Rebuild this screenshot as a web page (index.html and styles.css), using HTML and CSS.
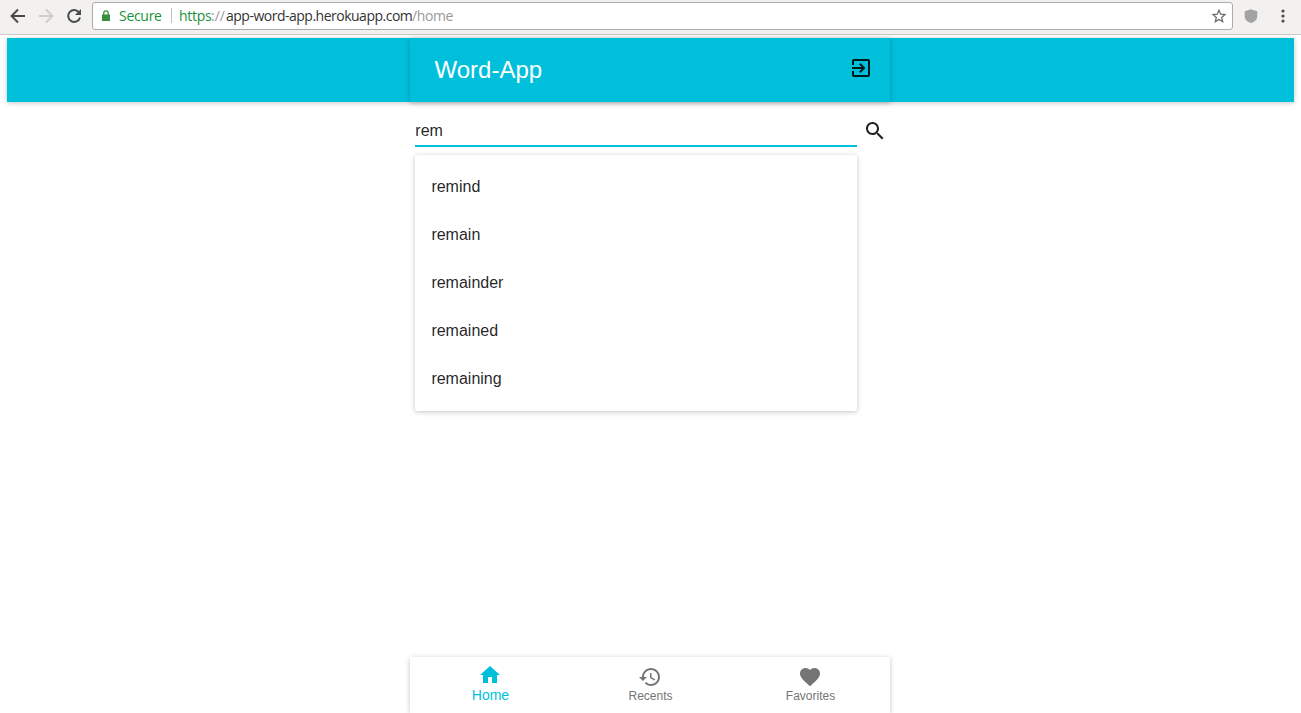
FILE: index.html
```
<!DOCTYPE html>
<html lang="en">
<head>
<meta charset="utf-8">
<title>Word-App</title>
<link rel="stylesheet" href="styles.css">
</head>
<body>
<div class="browser">
  <svg class="nav-icon" viewBox="0 0 16 16"><path d="M15 8H2M8 1.5L1.6 8L8 14.5" fill="none" stroke="#4a4a4a" stroke-width="2"/></svg>
  <svg class="nav-icon" viewBox="0 0 16 16"><path d="M1 8H14M8 1.5L14.4 8L8 14.5" fill="none" stroke="#cdcdcd" stroke-width="2"/></svg>
  <svg class="nav-icon" viewBox="0 0 16 16"><path d="M13.2 4.6A6 6 0 1 0 14 9.5" fill="none" stroke="#4a4a4a" stroke-width="2"/><path d="M15 1V7H9z" fill="#4a4a4a"/></svg>
  <div class="address">
    <svg class="lock" viewBox="0 0 8 11"><path d="M0 4.5h8V11H0z" fill="#388e3c"/><path d="M1.8 5V3a2.2 2.2 0 0 1 4.4 0v2" fill="none" stroke="#388e3c" stroke-width="1.2"/></svg>
    <span class="secure">Secure</span>
    <span class="divider"></span>
    <span class="url"><span class="scheme">https</span><span class="slashes">://</span><span class="host">app-word-app.herokuapp.com</span><span class="path">/home</span></span>
    <svg class="star" viewBox="0 0 14 14"><path d="M7 1.2l1.7 4 4.2.4-3.2 2.8 1 4.2L7 10.4l-3.7 2.2 1-4.2L1.1 5.6l4.2-.4z" fill="none" stroke="#6e6e6e" stroke-width="1.3"/></svg>
  </div>
  <svg class="shield" viewBox="0 0 14 14"><path d="M7 0.300L13.300 2.300V7c0 3.500-2.600 6-6.300 7-3.700-1-6.300-3.500-6.300-7V2.300z" fill="#a3a3a3"/></svg>
  <svg class="more" viewBox="0 0 4 14"><g fill="#4a4a4a"><circle cx="2" cy="2" r="1.6"/><circle cx="2" cy="7" r="1.6"/><circle cx="2" cy="12" r="1.6"/></g></svg>
</div>
<header class="banner">
  <div class="app-bar">
    <h1 class="title">Word-App</h1>
    <svg class="icon" viewBox="0 0 24 24"><path d="M10.09 15.59L11.5 17l5-5-5-5-1.41 1.41L12.67 11H3v2h9.670l-2.580 2.590zM19 3H5c-1.110 0-2 .9-2 2v4h2V5h14v14H5v-4H3v4c0 1.100.890 2 2 2h14c1.100 0 2-.9 2-2V5c0-1.100-.9-2-2-2z"/></svg>
  </div>
</header>
<main class="content">
  <div class="search">
    <div class="field">rem</div>
    <ul class="suggestions">
      <li>remind</li>
      <li>remain</li>
      <li>remainder</li>
      <li>remained</li>
      <li>remaining</li>
    </ul>
  </div>
  <svg class="icon search-icon" viewBox="0 0 24 24"><path d="M15.500 14h-.790l-.280-.270C15.410 12.590 16 11.110 16 9.500 16 5.910 13.090 3 9.500 3S3 5.910 3 9.500 5.910 16 9.500 16c1.610 0 3.090-.590 4.230-1.570l.270.280v.790l5 4.990L20.490 19l-4.990-5zm-6 0C7.010 14 5 11.990 5 9.500S7.010 5 9.500 5 14 7.010 14 9.500 11.990 14 9.500 14z"/></svg>
</main>
<nav class="bottom-nav">
  <div class="tab active">
    <svg class="tab-icon" viewBox="0 0 24 24"><path d="M10 20v-6h4v6h5v-8h3L12 3 2 12h3v8z"/></svg>
    <span class="label">Home</span>
  </div>
  <div class="tab">
    <svg class="tab-icon" viewBox="0 0 24 24"><path d="M13 3c-4.970 0-9 4.030-9 9H1l3.890 3.890.070.140L9 12H6c0-3.870 3.130-7 7-7s7 3.130 7 7-3.130 7-7 7c-1.930 0-3.680-.790-4.940-2.060l-1.420 1.420C8.270 19.990 10.510 21 13 21c4.970 0 9-4.030 9-9s-4.030-9-9-9zm-1 5v5l4.280 2.540.720-1.210-3.500-2.080V8H12z"/></svg>
    <span class="label">Recents</span>
  </div>
  <div class="tab">
    <svg class="tab-icon" viewBox="0 0 24 24"><path d="M12 21.350l-1.450-1.320C5.400 15.360 2 12.280 2 8.500 2 5.420 4.420 3 7.500 3c1.740 0 3.410.810 4.500 2.090C13.090 3.810 14.760 3 16.500 3 19.580 3 22 5.420 22 8.500c0 3.780-3.400 6.860-8.550 11.540L12 21.350z"/></svg>
    <span class="label">Favorites</span>
  </div>
</nav>
</body>
</html>
```
FILE: styles.css
```
* { box-sizing: border-box; }
body {
  margin: 0;
  height: 713px;
  display: flex;
  flex-direction: column;
  overflow: hidden;
  background: #fff;
  color: rgba(0, 0, 0, 0.87);
  font: 16px "Liberation Sans", Arial, sans-serif;
}
svg { display: block; flex: none; }

.browser {
  flex: none;
  height: 35px;
  padding: 0 15px 3px 10px;
  display: flex;
  align-items: center;
  background: #f2f1f0;
  border-bottom: 1px solid #cbcac9;
}
.nav-icon { width: 16px; height: 16px; margin-right: 12px; }
.address {
  width: 1141px;
  height: 28px;
  margin-left: -2px;
  padding: 0 6px 0 9px;
  display: flex;
  align-items: center;
  background: #fff;
  border: 1px solid #adaba9;
  border-radius: 3px;
  font: 14px/26px "Open Sans", "Noto Sans", sans-serif;
  white-space: nowrap;
}
.lock { width: 8px; height: 11px; margin-right: 9px; }
.secure { width: 43px; color: #1a8f3c; letter-spacing: -0.3px; }
.divider { width: 1px; height: 15px; margin: 0 7px 0 9px; background: #c0c0c0; }
.url { display: flex; flex: 1; color: #333; }
.scheme { width: 32px; color: #1a8f3c; letter-spacing: -0.3px; }
.slashes { width: 15px; color: #999; }
.host { width: 186px; letter-spacing: -0.5px; }
.path { color: #999; letter-spacing: -0.4px; }
.star { width: 14px; height: 14px; }
.shield { width: 14px; height: 14px; margin-left: 11px; }
.more { width: 4px; height: 14px; margin-left: 23px; }

.banner {
  flex: none;
  height: 64px;
  margin: 3px 7px 0;
  display: flex;
  justify-content: center;
  background: #00bfdb;
  box-shadow: 0 1px 6px rgba(0, 0, 0, 0.12), 0 1px 4px rgba(0, 0, 0, 0.12);
}
.app-bar {
  width: 480px;
  margin-right: 1px;
  padding: 0 17px 0 24.5px;
  display: flex;
  align-items: center;
  justify-content: space-between;
  background: #00bfdb;
  box-shadow: 0 1px 6px rgba(0, 0, 0, 0.12), 0 1px 4px rgba(0, 0, 0, 0.12);
}
.title { margin: 0; color: #fff; font-size: 24px; font-weight: 400; line-height: 64px; }
.icon { width: 24px; height: 24px; fill: rgba(0, 0, 0, 0.87); }
.app-bar .icon { margin-bottom: 4px; }

.content {
  flex: 1;
  width: 480px;
  margin-left: 410px;
  padding: 12px 0 0 5px;
  display: flex;
  align-items: flex-start;
}
.search { width: 442px; }
.field { height: 33px; padding-left: 0.3px; line-height: 34px; border-bottom: 2px solid #00bfdb; }
.suggestions {
  margin: 8px 0 0;
  padding: 8px 0;
  list-style: none;
  border-radius: 2px;
  box-shadow: 0 1px 6px rgba(0, 0, 0, 0.12), 0 1px 4px rgba(0, 0, 0, 0.12);
}
.suggestions li { padding-left: 16.4px; line-height: 48px; }
.search-icon { margin: 5px 0 0 6px; }

.bottom-nav {
  flex: none;
  width: 480px;
  height: 56px;
  margin-left: 410px;
  display: flex;
  box-shadow: 0 1px 6px rgba(0, 0, 0, 0.12), 0 1px 4px rgba(0, 0, 0, 0.12);
}
.tab {
  flex: 1;
  padding-top: 8px;
  display: flex;
  flex-direction: column;
  align-items: center;
  color: #757575;
  font-size: 12px;
  line-height: 14px;
}
.tab.active { padding-top: 6px; color: #00bfdb; font-size: 14px; line-height: 16px; }
.tab-icon { width: 24px; height: 24px; fill: currentColor; }
.label { padding-left: 1px; }
```
